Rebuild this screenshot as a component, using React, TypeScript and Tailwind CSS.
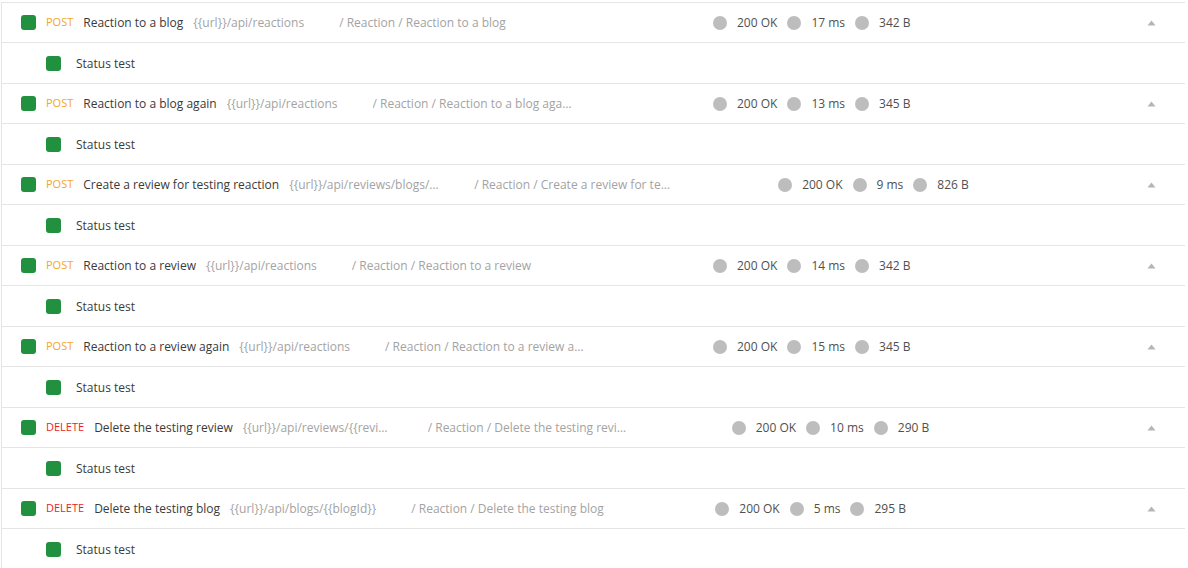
type Req = {
  method: "POST" | "DELETE";
  name: string;
  url: string;
  crumb: string;
  status: string;
  time: string;
  size: string;
};

const requests: Req[] = [
  { method: "POST", name: "Reaction to a blog", url: "{{url}}/api/reactions", crumb: "/ Reaction / Reaction to a blog", status: "200 OK", time: "17 ms", size: "342 B" },
  { method: "POST", name: "Reaction to a blog again", url: "{{url}}/api/reactions", crumb: "/ Reaction / Reaction to a blog again", status: "200 OK", time: "13 ms", size: "345 B" },
  { method: "POST", name: "Create a review for testing reaction", url: "{{url}}/api/reviews/blogs/{{blogId}}", crumb: "/ Reaction / Create a review for testing reaction", status: "200 OK", time: "9 ms", size: "826 B" },
  { method: "POST", name: "Reaction to a review", url: "{{url}}/api/reactions", crumb: "/ Reaction / Reaction to a review", status: "200 OK", time: "14 ms", size: "342 B" },
  { method: "POST", name: "Reaction to a review again", url: "{{url}}/api/reactions", crumb: "/ Reaction / Reaction to a review again", status: "200 OK", time: "15 ms", size: "345 B" },
  { method: "DELETE", name: "Delete the testing review", url: "{{url}}/api/reviews/{{reviewId}}", crumb: "/ Reaction / Delete the testing review", status: "200 OK", time: "10 ms", size: "290 B" },
  { method: "DELETE", name: "Delete the testing blog", url: "{{url}}/api/blogs/{{blogId}}", crumb: "/ Reaction / Delete the testing blog", status: "200 OK", time: "5 ms", size: "295 B" },
];

function Dot() {
  return <span className="w-[14px] h-[14px] rounded-full bg-[#bdbdbd] shrink-0" />;
}

function Stat({ text }: { text: string }) {
  return (
    <div className="flex items-center gap-[10px]">
      <Dot />
      <span className="text-[12px] text-[#505050] whitespace-nowrap">{text}</span>
    </div>
  );
}

function RequestRow({ r }: { r: Req }) {
  return (
    <>
      <div className="h-[40px] border-t border-[#e5e5e5] flex items-center">
        <div className="flex items-center min-w-[711px] pl-[19px]">
          <span className="w-[15px] h-[15px] rounded-[3px] bg-[#22913f] shrink-0" />
          <span
            className={
              r.method === "POST"
                ? "ml-[10px] text-[11px] text-[#f5a623]"
                : "ml-[10px] text-[11px] text-[#ed1c24]"
            }
          >
            {r.method}
          </span>
          <span className="ml-[10px] text-[12px] text-[#3a3a3a] whitespace-nowrap">{r.name}</span>
          <span className="ml-[10px] max-w-[150px] truncate text-[12px] text-[#a3a3a3]">{r.url}</span>
          <div className="ml-[35px] w-[304px] shrink-0">
            <div className="max-w-[200px] truncate text-[12px] text-[#a3a3a3]">{r.crumb}</div>
          </div>
        </div>
        <div className="flex items-center gap-[10px]">
          <Stat text={r.status} />
          <Stat text={r.time} />
          <Stat text={r.size} />
        </div>
        <div className="ml-auto mr-[29px]">
          <svg width="9" height="6" viewBox="0 0 9 6">
            <path d="M4.5 0.5 L8.5 5.5 L0.5 5.5 Z" fill="#b5b5b5" />
          </svg>
        </div>
      </div>
      <div className="h-[41px] border-t border-[#e5e5e5] flex items-center pl-[44px] pt-px">
        <span className="w-[15px] h-[15px] rounded-[3px] bg-[#22913f] shrink-0" />
        <span className="ml-[15px] text-[12px] text-[#3a3a3a]">Status test</span>
      </div>
    </>
  );
}

export default function App() {
  return (
    <div
      className="w-[1188px] h-[568px] overflow-hidden bg-white pt-[2px]"
      style={{ fontFamily: '"Open Sans", "Noto Sans", sans-serif' }}
    >
      <div className="ml-px w-[1184px] border-l border-[#e5e5e5]">
        {requests.map((r) => (
          <RequestRow key={r.name} r={r} />
        ))}
      </div>
    </div>
  );
}
